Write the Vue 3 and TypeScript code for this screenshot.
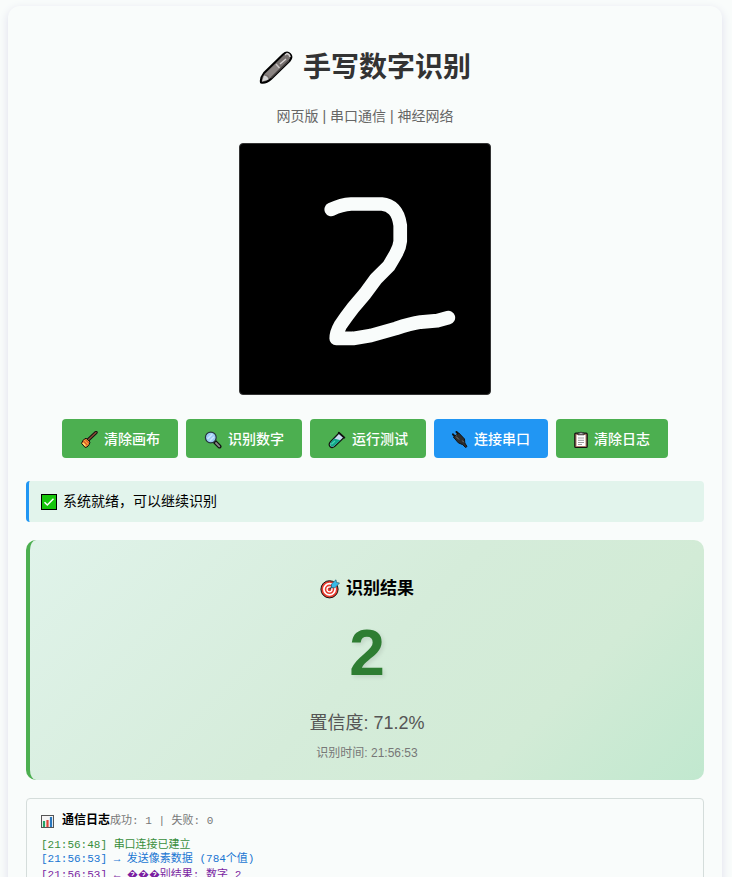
<script setup lang="ts">
import { ref } from 'vue'

interface LogEntry {
  time: string
  text: string
  kind: 'ok' | 'sent' | 'received'
}

const stroke = ref<string>(
  'M92 66Q102 61 112 60.500H143Q150 61 155 66T161.500 82V98Q161 104 157 111T150 123L137 136L126 151L114 165Q107 174 101 183Q97 190 97 196H114L132 193L157 186Q172 181 182 179.500L199 178L210 175',
)
const status = ref<string>('系统就绪，可以继续识别')
const digit = ref<string>('2')
const confidence = ref<string>('71.2%')
const recognizedAt = ref<string>('21:56:53')
const succeeded = ref<number>(1)
const failed = ref<number>(0)
const logs = ref<LogEntry[]>([
  { time: '21:56:48', text: '串口连接已建立', kind: 'ok' },
  { time: '21:56:53', text: '→ 发送像素数据 (784个值)', kind: 'sent' },
  { time: '21:56:53', text: '← \uFFFD\uFFFD\uFFFD别结果: 数字 2', kind: 'received' },
])

// Undecodable bytes become their own pieces, so that they take a full character cell.
function pieces(text: string): string[] {
  return text.split(/(\uFFFD+)/)
}

function clearCanvas(): void {
  stroke.value = ''
}

function clearLogs(): void {
  logs.value = []
}
</script>

<template>
  <div class="page">
    <main class="card">
      <h1 class="title">
        <svg class="pen" viewBox="0 0 34 34" aria-hidden="true">
          <path d="M2 31.500Q1 27 5 22L24 3.500Q28 0 31 3Q34 6 30.500 10L12 28Q7 32.500 2 31.500Z" fill="#77716f" stroke="#000" stroke-width="2" stroke-linejoin="round" />
          <path d="M3 30.500L5 24.500Q9 25 9.500 28.500Z" fill="#d5d5d5" />
          <path d="M6 23L17 13L21 17L11 27Q10 24 6 23Z" fill="#8b8583" />
          <path d="M17 13L20.500 17" stroke="#c9c5c4" stroke-width="1.500" />
          <path d="M21 13L27 8M26 4L28 2.500Q30.500 3 31 6" fill="none" stroke="#d6d2d1" stroke-width="1.500" />
          <path d="M12 27L30 9.500" stroke="#464241" stroke-width="1.500" />
        </svg>
        手写数字识别
      </h1>
      <p class="subtitle">网页版 | 串口通信 | 神经网络</p>

      <svg class="board" viewBox="0 0 252 252" role="img" aria-label="2">
        <path :d="stroke" fill="none" stroke="#f9fcfb" stroke-width="13.8" stroke-linecap="round" stroke-linejoin="round" />
      </svg>

      <div class="actions">
        <button type="button" class="btn" @click="clearCanvas">
          <svg class="icon" viewBox="0 0 18 18" aria-hidden="true">
            <path d="M8 9L16 1.5" stroke="#111" stroke-width="3.4" stroke-linecap="round" />
            <path d="M8 9L16 1.5" stroke="#8a4b35" stroke-width="1.4" stroke-linecap="round" />
            <path d="M6 7.2L10 11Q9 16 5.2 16.5L1.5 12.4Q2.6 8.3 6 7.2Z" fill="#f7a736" stroke="#111" stroke-linejoin="round" />
            <path d="M3.3 10L7.6 14.5M5.2 8.4L9 12.2" stroke="#d9582c" stroke-width="1.3" />
            <path d="M3 12.2L5.2 14.5" stroke="#ffe174" stroke-width="1.3" />
          </svg>
          清除画布
        </button>
        <button type="button" class="btn">
          <svg class="icon" viewBox="0 0 18 18" aria-hidden="true">
            <path d="M10.5 10.5L15.5 15.5" stroke="#111" stroke-width="4" stroke-linecap="round" />
            <path d="M12 12L15.3 15.3" stroke="#888" stroke-width="1.8" stroke-linecap="round" />
            <circle cx="6.8" cy="6.5" r="5.4" fill="#9bcbf4" stroke="#26343c" stroke-width="1.2" />
            <path d="M3.5 8L8.3 3.1M6 9.8L10 5.7" stroke="#c9e5fc" stroke-width="1.6" />
          </svg>
          识别数字
        </button>
        <button type="button" class="btn">
          <svg class="icon" viewBox="0 0 18 18" aria-hidden="true">
            <path d="M11 2L16 6.5L6.5 15.500Q4 17.500 2 15.500Q.2 13.500 2.3 11Z" fill="#c8dcf3" stroke="#111" stroke-width="1.2" stroke-linejoin="round" />
            <path d="M6.200 7.500L12.500 9.200L6 15Q4 16.500 2.6 15Q1.4 13.6 3 11Z" fill="#10a789" />
            <path d="M3.4 13.2L7 10" stroke="#49d0b2" stroke-width="1.2" />
            <path d="M10.8 1.6L16.4 6.6" stroke="#111" stroke-width="1.8" stroke-linecap="round" />
          </svg>
          运行测试
        </button>
        <button type="button" class="btn btn-serial">
          <svg class="icon icon-plug" viewBox="0 0 16 18" aria-hidden="true">
            <path d="M2.5 5L1 3.3M6 2.5L4.5 1" stroke="#111" stroke-width="2" stroke-linecap="round" />
            <path d="M1.5 6.2L6.8 2L12.5 8L12.8 12L15 15.5L13.5 16.5L10.8 13.7L6.3 11.8Z" fill="#2d2d2d" stroke="#111" stroke-linejoin="round" />
            <path d="M4 5.5L7 8.5M10.3 9.5L11.8 11.3M3.7 3.7L4.5 4.4" stroke="#777" />
          </svg>
          连接串口
        </button>
        <button type="button" class="btn" @click="clearLogs">
          <svg class="icon icon-board" viewBox="0 0 14 18" aria-hidden="true">
            <rect x=".8" y="2.2" width="12.4" height="14.3" rx="1" fill="#ab7966" stroke="#111" stroke-width="1.2" />
            <path d="M2.5 4H11.5V15H2.5Z" fill="#fff" />
            <path d="M4 3.8V2H5.5Q7 0 8.5 2H10V3.8Z" fill="#aaa" stroke="#222" stroke-width=".8" />
            <path d="M4 7H10M4 9.3H10M4 11.5H10M4 13.5H8" stroke="#9b9b9b" />
          </svg>
          清除日志
        </button>
      </div>

      <div class="status" role="status">
        <svg class="check" viewBox="0 0 16 16" aria-hidden="true">
          <rect x=".5" y=".5" width="15" height="15" fill="#16c60c" stroke="#000" />
          <path d="M3.5 8.2L6.3 11L12.5 4.8" fill="none" stroke="#fff" stroke-width="1.5" />
        </svg>
        {{ status }}
      </div>

      <section class="result">
        <h2 class="result-title">
          <svg class="target" viewBox="0 0 20 20" aria-hidden="true">
            <circle cx="9.5" cy="10.3" r="8.6" fill="#e83b2e" stroke="#161616" />
            <circle cx="9.5" cy="10.3" r="5.6" fill="none" stroke="#fff" stroke-width="1.7" />
            <circle cx="9.5" cy="10.3" r="2.5" fill="#e83b2e" stroke="#fff" stroke-width="1.3" />
            <path d="M9.5 10.3L14 6" stroke="#253e4d" stroke-width="1.2" />
            <path d="M11.500 5L16 .8L16.5 3.5L19.500 4L15 8.8L11.500 8.500Z" fill="#36b9e8" stroke="#24627b" stroke-width=".7" />
          </svg>
          识别结果
        </h2>
        <p class="digit">{{ digit }}</p>
        <p class="confidence">置信度: {{ confidence }}</p>
        <p class="time">识别时间: {{ recognizedAt }}</p>
      </section>

      <section class="log">
        <header class="log-head">
          <svg class="chart" viewBox="0 0 13 13" aria-hidden="true">
            <rect x=".5" y=".5" width="12" height="12" fill="#f5f5f5" stroke="#555" />
            <path d="M3 6V12" stroke="#21a366" stroke-width="2.2" />
            <path d="M6.5 5V12" stroke="#df4438" stroke-width="2.2" />
            <path d="M10 2V12" stroke="#2877bd" stroke-width="2.2" />
          </svg>
          <h3 class="log-title">通信日志</h3>
          <span class="stats">成功: {{ succeeded }} | 失败: {{ failed }}</span>
        </header>
        <ul class="entries">
          <li v-for="(entry, index) in logs" :key="index" :class="entry.kind">
            [{{ entry.time }}] <span v-for="(piece, part) in pieces(entry.text)" :key="part" :class="{ unknown: part % 2 === 1 }">{{ piece }}</span>
          </li>
        </ul>
      </section>
    </main>
  </div>
</template>

<style>
body {
  margin: 0;
}
</style>

<style scoped>
.page {
  box-sizing: border-box;
  height: 100vh;
  overflow-y: auto;
  scrollbar-width: none;
  padding: 6px 10px 20px 8px;
  background: #f9fcfb;
  color: #000;
  font-family: "Liberation Sans", "Noto Sans CJK SC", sans-serif;
  font-size: 14px;
}

.card {
  box-sizing: border-box;
  max-width: 800px;
  margin: 0 auto;
  padding: 42px 18px 20px;
  border-radius: 12px;
  background: #f9fcfb;
  box-shadow: 0 3px 10px #dedeec;
}

h1,
h2,
h3,
p,
ul {
  margin: 0;
  padding: 0;
}

.title {
  display: flex;
  align-items: center;
  justify-content: center;
  gap: 10px;
  color: #333;
  font-size: 28px;
  line-height: 40px;
}

.pen {
  width: 34px;
  height: 34px;
}

.subtitle {
  margin: 18px 0 17px;
  color: #666;
  line-height: 20px;
  text-align: center;
}

.board {
  display: block;
  box-sizing: border-box;
  width: 252px;
  max-width: 100%;
  margin: 0 auto;
  border: 1px solid #333;
  border-radius: 4px;
  background: #000;
}

.actions {
  display: flex;
  flex-wrap: wrap;
  justify-content: center;
  gap: 8px;
  margin: 24px 0 23px;
}

.btn {
  display: flex;
  align-items: center;
  gap: 6px;
  padding: 10px 18px 8px;
  border: 0;
  border-radius: 4px;
  background: #4caf50;
  color: #fff;
  font: inherit;
  font-weight: 500;
  line-height: 21px;
  cursor: pointer;
}

.btn-serial {
  background: #2196f3;
}

.icon {
  width: 18px;
  height: 18px;
}

.icon-plug {
  width: 16px;
}

.icon-board {
  width: 14px;
}

.status {
  display: flex;
  align-items: center;
  gap: 6px;
  padding: 10px 12px;
  border-left: 3px solid #2196f3;
  border-radius: 4px;
  background: #e2f4ec;
  line-height: 21px;
}

.check {
  width: 16px;
  height: 16px;
}

.result {
  margin: 18px 0;
  padding: 37px 18px 18px;
  border-left: 4px solid #4caf50;
  border-radius: 10px;
  background: linear-gradient(135deg, #e0f3ea, #d5ecda 50%, #d2ebd6 75%, #c1e8cf);
  text-align: center;
}

.result-title {
  display: flex;
  align-items: center;
  justify-content: center;
  gap: 6px;
  font-size: 17px;
  line-height: 24px;
}

.target {
  width: 20px;
  height: 20px;
}

.digit {
  margin: 20px 0 26px;
  color: #2e7d32;
  font-size: 64px;
  font-weight: 700;
  line-height: 64px;
  text-shadow: 2px 2px 4px rgba(0, 0, 0, 0.1);
}

.confidence {
  color: #555;
  font-size: 18px;
  line-height: 24px;
}

.time {
  margin-top: 10px;
  color: #777;
  font-size: 12px;
  line-height: 17px;
}

.log {
  min-height: 200px;
  padding: 14px;
  border: 1px solid #d5dddb;
  border-radius: 4px;
  font-family: "Liberation Mono", "Noto Sans CJK SC", monospace;
  font-size: 11px;
  line-height: 14px;
}

.log-head {
  display: flex;
  align-items: center;
  margin-bottom: 9px;
}

.chart {
  width: 13px;
  height: 13px;
  margin-right: 8px;
}

.log-title {
  font-size: 12px;
  line-height: 16px;
}

.stats {
  color: #777;
}

.entries {
  list-style: none;
}

.unknown {
  font-family: "Noto Sans CJK SC", sans-serif;
}

.ok {
  color: #388e3c;
}

.sent {
  color: #1976d2;
}

.received {
  color: #7b1fa2;
}
</style>
